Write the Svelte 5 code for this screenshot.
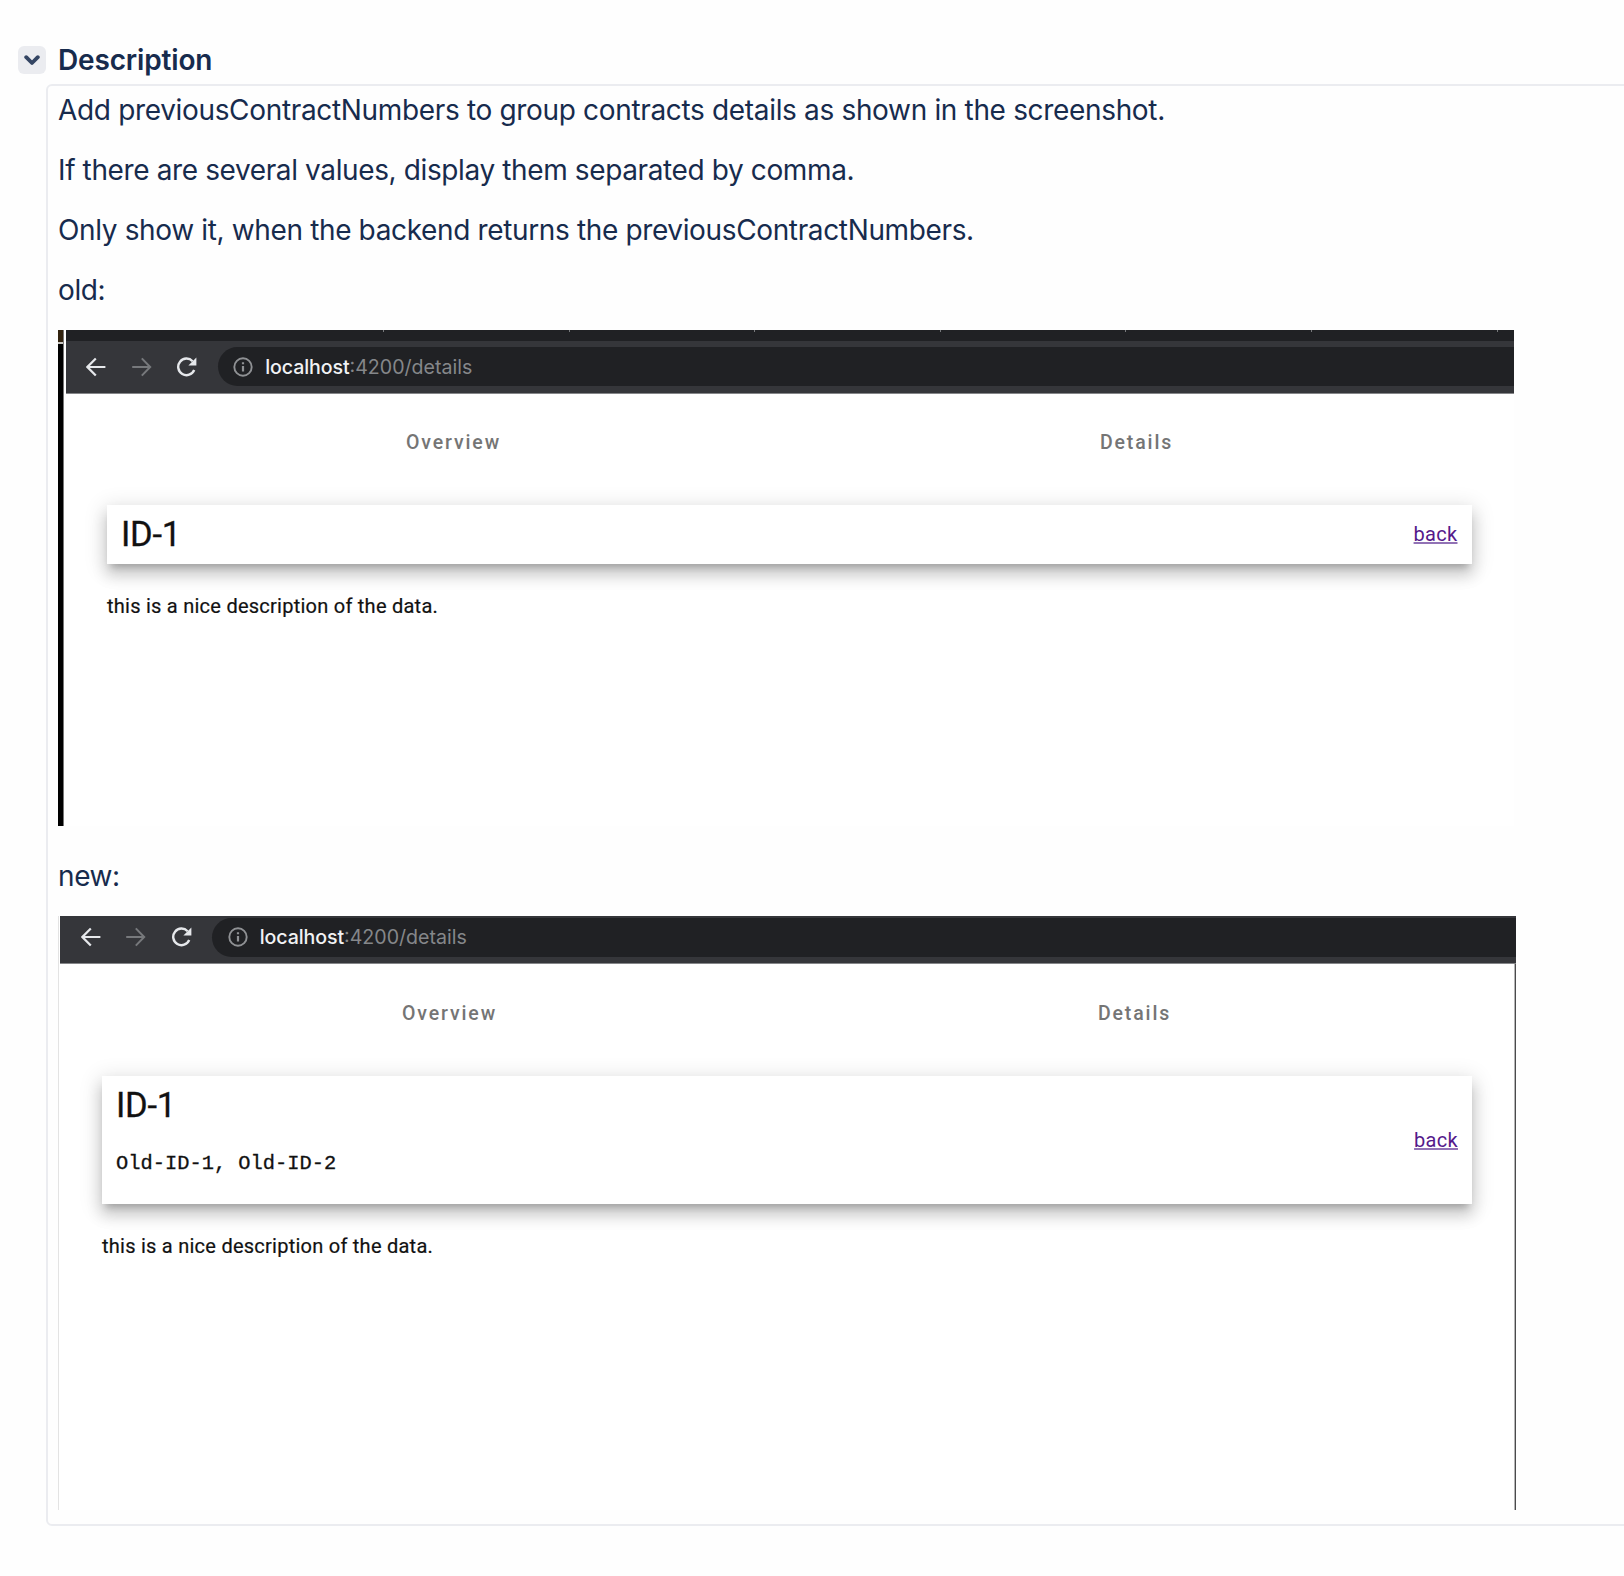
<script>
  const paragraphs = [
    { text: 'Add previousContractNumbers to group contracts details as shown in the screenshot.', cls: 'intro' },
    { text: 'If there are several values, display them separated by comma.', cls: 'rule' },
    { text: 'Only show it, when the backend returns the previousContractNumbers.', cls: 'condition' },
    { text: 'old:', cls: 'label' }
  ];
  const tabSeparators = [0, 1, 2, 3, 4, 5, 6];
</script>

{#snippet toolbar()}
  <div class="toolbar">
    <svg class="nav" width="20" height="20" viewBox="0 0 20 20">
      <path d="M19.4 10H1.8M9.8 1.4L1.4 10l8.4 8.6" fill="none" stroke="#e6e8eb" stroke-width="2.2" />
    </svg>
    <svg class="nav" width="20" height="20" viewBox="0 0 20 20">
      <path d="M0.2 10h17.6M9.8 1.4l8.4 8.6-8.4 8.6" fill="none" stroke="#77797c" stroke-width="2" />
    </svg>
    <svg class="nav" width="20" height="20" viewBox="0 0 20 20">
      <path d="M17.2 13A8.3 8.3 0 1 1 15.6 4.2" fill="none" stroke="#e6e8eb" stroke-width="2.4" />
      <path d="M19.4 0.6V8.6H11.4z" fill="#e6e8eb" />
    </svg>
    <div class="address">
      <svg width="20" height="20" viewBox="0 0 20 20">
        <circle cx="10" cy="10" r="8.7" fill="none" stroke="#8f9194" stroke-width="1.9" />
        <path d="M10 9v5.6M10 5.2v2.1" stroke="#8f9194" stroke-width="2.2" />
      </svg>
      <span class="url"><b>localhost</b>:4200/details</span>
    </div>
  </div>
{/snippet}

{#snippet tabs()}
  <div class="tabs"><span>Overview</span><span>Details</span></div>
{/snippet}

<main>
  <header>
    <button aria-label="Collapse">
      <svg width="16" height="11" viewBox="0 0 16 11">
        <path d="M2.2 2.2L8 8l5.8-5.8" fill="none" stroke="#344563" stroke-width="3.8" stroke-linecap="round" stroke-linejoin="round" />
      </svg>
    </button>
    <h4>Description</h4>
  </header>

  <section class="field">
    {#each paragraphs as p}
      <p class={p.cls}>{p.text}</p>
    {/each}

    <div class="shot old">
      <div class="edge"><i></i></div>
      <div class="window">
        <div class="strip">
          {#each tabSeparators as s (s)}<i></i>{/each}
        </div>
        {@render toolbar()}
        {@render tabs()}
        <div class="card">
          <span class="id">ID-1</span>
          <a href="#back">back</a>
        </div>
        <div class="desc">this is a nice description of the data.</div>
      </div>
    </div>

    <p class="label">new:</p>

    <div class="shot new">
      <div class="window">
        {@render toolbar()}
        {@render tabs()}
        <div class="card">
          <div class="ids">
            <span class="id">ID-1</span>
            <code>Old-ID-1, Old-ID-2</code>
          </div>
          <a href="#back">back</a>
        </div>
        <div class="desc">this is a nice description of the data.</div>
      </div>
    </div>
  </section>
</main>

<style>
  :global(body) { background: #fefefe; overflow: hidden; }
  * { box-sizing: border-box; }
  main {
    height: 1576px;
    padding: 40px 0 0 18px;
    overflow: hidden;
    font-family: Inter, 'Liberation Sans', sans-serif;
    color: #172b4d;
  }
  header { display: flex; align-items: center; gap: 12px; height: 40px; }
  button {
    display: flex; align-items: center; justify-content: center;
    width: 28px; height: 28px; padding: 0; border: 0; border-radius: 6px;
    background: #ebecf0;
  }
  h4 { margin: 0; font-size: 28px; font-weight: 600; line-height: 40px; letter-spacing: -0.16px; }
  .field {
    width: 1620px; height: 1442px;
    margin: 4px 0 0 28px;
    padding: 4px 0 0 10px;
    border: 2px solid #ebecf0;
    border-radius: 6px;
  }
  p { margin: 0 0 20px; font-size: 28px; line-height: 40px; white-space: nowrap; }
  .intro { letter-spacing: -0.335px; }
  .rule { letter-spacing: -0.38px; }
  .condition { letter-spacing: -0.36px; }
  .label { letter-spacing: -0.4px; }

  .shot { background: #fff; font-family: Roboto, sans-serif; color: #111; }
  .old { display: flex; width: 1456px; height: 496px; margin-bottom: 30px; }
  .edge { width: 6px; background: #000; border-right: 1px solid #777; }
  .edge i { display: block; height: 14px; background: #32230f; border-bottom: 2px solid #c9c7c2; }
  .old .window { flex: 1; padding-left: 1.5px; }
  .strip { display: flex; gap: 184.6px; height: 11px; padding-left: 317.5px; background: #202124; }
  .strip i { flex: none; width: 1px; height: 2px; background: #77797c; }

  .toolbar {
    display: flex; align-items: flex-start;
    height: 53px; padding: 16px 0 0 20.5px;
    background: #35363a; border-bottom: 1px solid #858689;
  }
  .nav { flex: none; margin-right: 25.6px; }
  .address {
    display: flex; flex: 1; align-items: center; gap: 12px;
    height: 39px; margin: -10px 0 0 -5px; padding-left: 15.5px;
    border-radius: 20px 0 0 20px; background: #202124;
  }
  .url {
    color: #85878a; font: 19.6px/24px Inter, sans-serif;
    white-space: nowrap;
  }
  .url b { color: #f1f2f4; font-weight: 500; letter-spacing: -0.1px; }

  .tabs { display: flex; height: 110.5px; padding: 35.5px 36px 0 46.5px; }
  .tabs span {
    flex: 1; text-align: center; color: #757575;
    font-size: 19.5px; font-weight: 500; line-height: 26px; letter-spacing: 1.87px;
  }
  .card {
    display: flex; align-items: center; justify-content: space-between;
    height: 59px; margin: 0 42.5px 0 41.5px; padding: 0 14px 0 14px;
    background: #fff;
    box-shadow: 0 7px 7px -4px rgba(0,0,0,.2), 0 11px 14px 1px rgba(0,0,0,.14), 0 4px 20px 3px rgba(0,0,0,.12);
  }
  .id { font-size: 34.5px; line-height: 40px; letter-spacing: -0.3px; color: #111; -webkit-text-stroke: 0.3px; }
  a {
    color: #551a8b; font-size: 20px; line-height: 24px; letter-spacing: 0.3px;
    text-decoration: underline; text-decoration-thickness: 2px; text-decoration-color: #9172b5;
    text-decoration-skip-ink: none; text-underline-offset: 1px;
  }
  .desc {
    margin: 30px 0 0 41.5px; font-size: 20px; line-height: 24px;
    letter-spacing: 0.25px; white-space: nowrap; -webkit-text-stroke: 0.2px;
  }

  .new {
    width: 1458px; height: 594px;
    background: #fff; border-left: 1px solid #e3e3e3;
    border-right: 1px solid #4a4a4c;
  }
  .new .window { height: 100%; border-right: 1px solid #b5b5b6; }
  .new .toolbar { position: relative; height: 48px; margin: 0 -2px 0 1px; padding: 11px 0 0 20.5px; }
  .new .address { margin-top: -9.5px; }
  .new .tabs { height: 112px; padding: 37px 37px 0 48px; }
  .new .card { height: 128px; margin: 0 42px 0 43px; align-items: stretch; }
  .new a { align-self: center; margin-top: -1px; }
  .ids { display: flex; flex-direction: column; padding-top: 9px; }
  code { margin-top: 27px; font: 20.4px/24px 'Liberation Mono', monospace; -webkit-text-stroke: 0.3px; }
  .new .desc { margin: 29.5px 0 0 43px; }
</style>
